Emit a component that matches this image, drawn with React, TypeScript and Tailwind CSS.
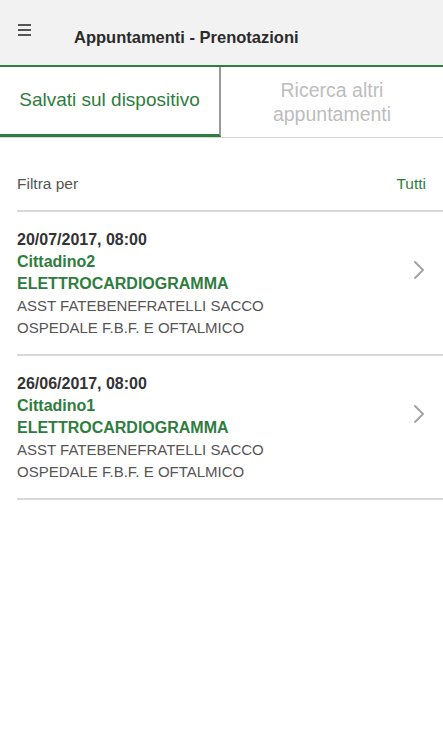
import React from "react";

const items = [
  { date: "20/07/2017, 08:00", name: "Cittadino2" },
  { date: "26/06/2017, 08:00", name: "Cittadino1" },
];

function Chevron() {
  return (
    <svg width="14" height="20" viewBox="0 0 14 20" fill="none">
      <path d="M3 2 L11 10 L3 18" stroke="#a3a3a3" strokeWidth="2" strokeLinecap="round" strokeLinejoin="round" />
    </svg>
  );
}

export default function App() {
  return (
    <div className="w-[443px] h-[738px] bg-white overflow-hidden" style={{ fontFamily: '"Liberation Sans", Arial, sans-serif' }}>
      <header className="h-[65px] bg-[#f2f2f2] flex items-center">
        <div className="w-[74px] pl-[18px] flex flex-col gap-[3px] -mt-[6px]">
          <span className="block w-[13px] h-[2px] bg-[#555]" />
          <span className="block w-[13px] h-[2px] bg-[#555]" />
          <span className="block w-[13px] h-[2px] bg-[#555]" />
        </div>
        <h1 className="text-[16.5px] font-bold text-[#2b2b2b] mt-[9px]">Appuntamenti - Prenotazioni</h1>
      </header>
      <div className="h-[2px] bg-[#2e7d3e]" />
      <nav className="flex h-[71px] border-b border-[#d6d6d6]">
        <div className="w-[221px] border-r-2 border-[#9a9a9a] border-b-[3px] border-b-[#2e7d3e] flex items-center justify-center">
          <span className="text-[19px] text-[#2e7d3e]">Salvati sul dispositivo</span>
        </div>
        <div className="flex-1 flex items-center justify-center text-center text-[19.5px] leading-[24px] text-[#bdbdbd]">
          <span>Ricerca altri<br />appuntamenti</span>
        </div>
      </nav>
      <div className="pl-[17px] mt-[33px]">
        <div className="flex items-center justify-between pr-[17px] h-[26px]">
          <span className="text-[15.5px] text-[#555]">Filtra per</span>
          <span className="text-[15.5px] text-[#2e7d3e]">Tutti</span>
        </div>
        <div className="h-[2px] bg-[#d9d9d9] mt-[13px]" />
        {items.map((it) => (
          <div key={it.date}>
            <div className="flex items-center pt-[17px] pb-[15px] pr-[17px]">
              <div className="flex-1 leading-[22px]">
                <div className="text-[16px] font-bold text-[#333]">{it.date}</div>
                <div className="text-[16px] font-bold text-[#2e7d3e]">{it.name}</div>
                <div className="text-[16px] font-bold text-[#2e7d3e]">ELETTROCARDIOGRAMMA</div>
                <div className="text-[15px] text-[#555]">ASST FATEBENEFRATELLI SACCO</div>
                <div className="text-[15px] text-[#555]">OSPEDALE F.B.F. E OFTALMICO</div>
              </div>
              <div className="-mt-[28px]">
                <Chevron />
              </div>
            </div>
            <div className="h-[2px] bg-[#d9d9d9]" />
          </div>
        ))}
      </div>
    </div>
  );
}
